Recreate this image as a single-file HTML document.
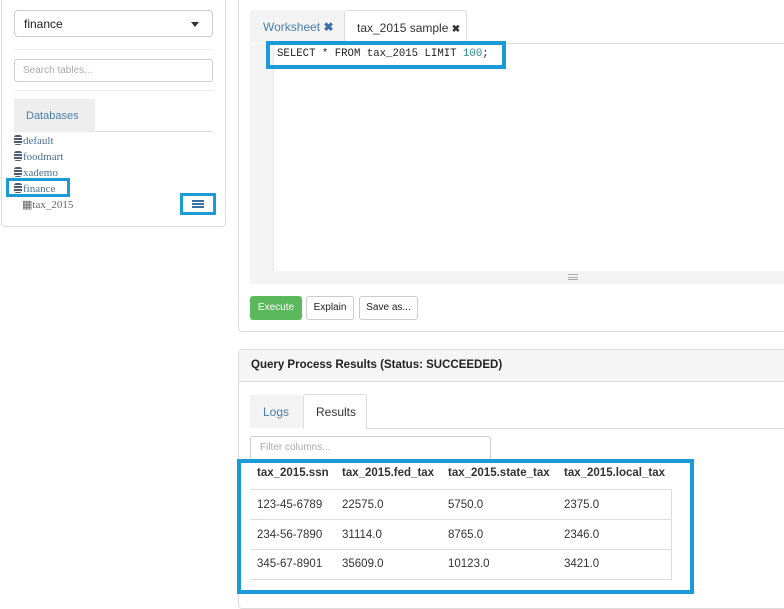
<!DOCTYPE html>
<html><head><style>
*{box-sizing:border-box;margin:0;padding:0}
body{width:784px;height:604px;background:#fff;font-family:"Liberation Sans",sans-serif;position:relative;overflow:hidden;font-size:11.5px;color:#333}
.abs{position:absolute}
.blue{position:absolute;border:4px solid #1a9ad6}
.db{display:inline-block;width:8px;height:10px;margin-right:1px;vertical-align:-1px;background:repeating-linear-gradient(#4d5b6e 0 2px,#fff 2px 3px);border-radius:3px/2px}
</style></head><body>
<!-- left panel -->
<div class="abs" style="left:1px;top:-5px;width:225px;height:232px;border:1px solid #ddd;border-radius:4px"></div>
<div class="abs" style="left:14px;top:10px;width:199px;height:27px;border:1px solid #ccc;border-radius:4px;padding:6px 9px;font-size:12px;color:#222">finance
<div class="abs" style="right:13px;top:11px;width:0;height:0;border-left:4px solid transparent;border-right:4px solid transparent;border-top:5px solid #333"></div></div>
<div class="abs" style="left:14px;top:49px;width:199px;height:1px;background:#eee"></div>
<div class="abs" style="left:14px;top:59px;width:199px;height:23px;border:1px solid #ccc;border-radius:3px;padding:5px 8px;font-size:10px;color:#aaa">Search tables...</div>
<div class="abs" style="left:14px;top:90px;width:199px;height:1px;background:#eee"></div>
<div class="abs" style="left:14px;top:99px;width:81px;height:33px;background:#eee;color:#4a7faa;font-size:11px;padding:11px 0 0 12px">Databases</div>
<div class="abs" style="left:95px;top:131px;width:118px;height:1px;background:#ddd"></div>
<div class="abs" style="left:14px;top:133px;font-family:'Liberation Serif',serif;font-size:11px;color:#4a6f94;line-height:16px">
<div><span class="db"></span>default</div><div><span class="db"></span>foodmart</div><div><span class="db"></span>xademo</div><div><span class="db"></span>finance</div><div style="padding-left:8px;color:#666">&#9638;tax_2015</div></div>
<div class="blue" style="left:6px;top:178px;width:64px;height:19px;border-width:3px"></div>
<div class="blue" style="left:180px;top:193px;width:36px;height:22px;border-width:3px"></div>
<div class="abs" style="left:192px;top:200px;width:12px;height:8px;border-top:2px solid #3a6ea5;border-bottom:2px solid #3a6ea5"><div style="margin-top:1px;height:2px;background:#3a6ea5"></div></div>
<!-- main panel -->
<div class="abs" style="left:238px;top:-5px;width:560px;height:337px;border:1px solid #ddd;border-radius:4px"></div>
<div class="abs" style="left:250px;top:10px;width:94px;height:33px;background:#f3f3f3;color:#4a7faa;font-size:12px;padding:10px 0 0 13px">Worksheet <b style="color:#3a6ea5">✖</b></div>
<div class="abs" style="left:344px;top:10px;width:123px;height:34px;border:1px solid #ddd;border-bottom:none;border-radius:3px 3px 0 0;background:#fff;font-size:12px;padding:10px 0 0 12px">tax_2015 sample <b style="font-size:10px">✖</b></div>
<div class="abs" style="left:467px;top:43px;width:317px;height:1px;background:#ddd"></div>
<div class="abs" style="left:250px;top:44px;width:534px;height:240px;background:#f4f4f4"></div>
<div class="abs" style="left:273px;top:44px;width:511px;height:227px;background:#fff;border-left:1px solid #e6e6e6"></div>
<div class="abs" style="left:568px;top:274px;width:10px;height:6px;border-top:1px solid #aaa;border-bottom:1px solid #aaa"><div style="margin-top:2px;height:1px;background:#aaa"></div></div>
<div class="blue" style="left:266px;top:41px;width:240px;height:28px"></div>
<div class="abs" style="left:277px;top:48px;font-family:'Liberation Mono',monospace;font-size:10.7px;color:#222">SELECT * FROM tax_2015 LIMIT <span style="color:#2a8a8a">100</span>;</div>
<div class="abs" style="left:250px;top:296px;width:52px;height:24px;background:#5cb85c;border-radius:3px;color:#fff;font-size:10px;text-align:center;line-height:24px">Execute</div>
<div class="abs" style="left:306px;top:296px;width:48px;height:24px;border:1px solid #ccc;border-radius:3px;font-size:10px;text-align:center;line-height:22px;color:#222">Explain</div>
<div class="abs" style="left:359px;top:296px;width:59px;height:24px;border:1px solid #ccc;border-radius:3px;font-size:10px;text-align:center;line-height:22px;color:#222">Save as...</div>
<!-- results panel -->
<div class="abs" style="left:238px;top:349px;width:560px;height:260px;border:1px solid #ddd;border-radius:4px"></div>
<div class="abs" style="left:239px;top:350px;width:545px;height:32px;background:#f5f5f5;border-bottom:1px solid #ddd;font-weight:bold;font-size:11.5px;padding:9px 0 0 12px;color:#222">Query Process Results (Status: SUCCEEDED)</div>
<div class="abs" style="left:250px;top:395px;width:53px;height:33px;background:#f3f3f3;color:#4a7faa;font-size:12px;padding:10px 0 0 13px">Logs</div>
<div class="abs" style="left:303px;top:394px;width:64px;height:35px;border:1px solid #ddd;border-bottom:none;border-radius:3px 3px 0 0;background:#fff;font-size:12px;padding:10px 0 0 12px">Results</div>
<div class="abs" style="left:367px;top:428px;width:417px;height:1px;background:#ddd"></div>
<div class="abs" style="left:250px;top:436px;width:241px;height:24px;border:1px solid #ccc;border-radius:3px;padding:5px 9px;font-size:10px;color:#aaa">Filter columns...</div>
<div class="blue" style="left:237px;top:459px;width:457px;height:135px"></div>
<div class="abs" style="left:250px;top:489px;width:422px;height:91px;border:1px solid #ddd;border-left:none"></div>
<div class="abs" style="left:250px;top:519px;width:422px;height:1px;background:#ddd"></div>
<div class="abs" style="left:250px;top:549px;width:422px;height:1px;background:#ddd"></div>
<div class="abs" style="top:467px;left:257px;font-weight:bold;color:#333">tax_2015.ssn</div>
<div class="abs" style="top:467px;left:342px;font-weight:bold;color:#333">tax_2015.fed_tax</div>
<div class="abs" style="top:467px;left:448px;font-weight:bold;color:#333">tax_2015.state_tax</div>
<div class="abs" style="top:467px;left:564px;font-weight:bold;color:#333">tax_2015.local_tax</div>
<div class="abs" style="top:499px;left:257px">123-45-6789</div><div class="abs" style="top:499px;left:342px">22575.0</div><div class="abs" style="top:499px;left:448px">5750.0</div><div class="abs" style="top:499px;left:564px">2375.0</div>
<div class="abs" style="top:529px;left:257px">234-56-7890</div><div class="abs" style="top:529px;left:342px">31114.0</div><div class="abs" style="top:529px;left:448px">8765.0</div><div class="abs" style="top:529px;left:564px">2346.0</div>
<div class="abs" style="top:558px;left:257px">345-67-8901</div><div class="abs" style="top:558px;left:342px">35609.0</div><div class="abs" style="top:558px;left:448px">10123.0</div><div class="abs" style="top:558px;left:564px">3421.0</div>
</body></html>
